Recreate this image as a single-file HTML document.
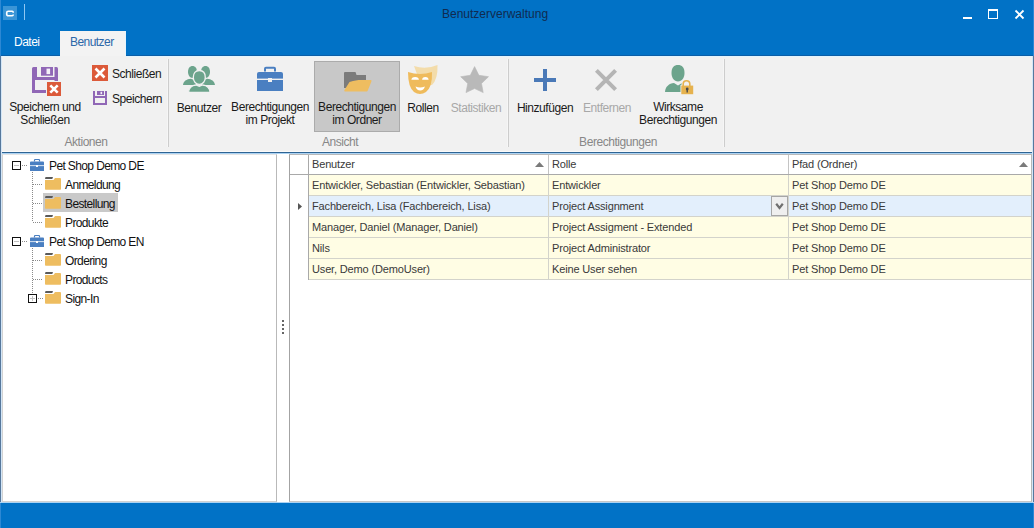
<!DOCTYPE html>
<html><head><meta charset="utf-8">
<style>
*{margin:0;padding:0;box-sizing:border-box}
html,body{width:1034px;height:528px;overflow:hidden;background:#fff}
body{position:relative;font-family:"Liberation Sans",sans-serif;font-size:11px;color:#262626}
.a{position:absolute}
.t{position:absolute;white-space:pre;line-height:13px}
.rs{font-size:12px;letter-spacing:-0.45px;color:#1a1a1a}
.c{position:absolute;white-space:pre;line-height:13px;text-align:center;width:140px;font-size:12px;letter-spacing:-0.45px;color:#1a1a1a}
svg{position:absolute;overflow:visible}
.sep{position:absolute;top:59px;width:1px;height:88px;background:#cdcdcd;box-shadow:-1px 0 0 #f6f6f6}
.gl{position:absolute;text-align:center;width:140px;color:#878787;line-height:13px;font-size:12px;letter-spacing:-0.45px}
.c.dis{color:#a8a8a8}
.tr{position:absolute;white-space:pre;line-height:13px;color:#111;font-size:12px;letter-spacing:-0.62px}
.row{position:absolute;left:290px;width:741px;height:21px}
.cell{position:absolute;top:0;height:21px;white-space:pre;line-height:21px;color:#353535;padding-left:4px}
.gc{position:absolute;white-space:pre;line-height:21px;height:21px;color:#393939;letter-spacing:-0.15px}
.gh{position:absolute;white-space:pre;line-height:19px;height:19px;color:#393939;letter-spacing:-0.15px}
</style></head><body>
<!-- title bar + tabs -->
<div class="a" style="left:0;top:0;width:1034px;height:56px;background:#0172c6"></div>
<div class="a" style="left:0;top:55px;width:1034px;height:1px;background:#0b5ea7"></div>
<!-- app icon -->
<div class="a" style="left:3px;top:6px;width:14px;height:14px;background:#3b95d6"></div>
<svg style="left:3px;top:6px" width="14" height="14"><path d="M10.2 6.8 V6.2 a1 1 0 0 0 -1 -1 H5.3 a1.6 1.6 0 0 0 -1.6 1.6 V8.2 a1.6 1.6 0 0 0 1.6 1.6 H9.2 a1 1 0 0 0 1 -1 V8.5" fill="none" stroke="#fff" stroke-width="1.6"/></svg>
<div class="a" style="left:24px;top:4px;width:1px;height:16px;background:#8fc7f2"></div>
<div class="t" style="left:442px;top:8px;font-size:12px;color:#102b50">Benutzerverwaltung</div>
<!-- window buttons -->
<div class="a" style="left:963px;top:17px;width:9px;height:2px;background:#fff"></div>
<div class="a" style="left:988px;top:9px;width:10px;height:10px;border:1px solid #fff;border-top-width:2px"></div>
<svg style="left:1015px;top:10px" width="9" height="9"><path d="M0.5 0.5 L8.5 8.5 M8.5 0.5 L0.5 8.5" stroke="#fff" stroke-width="1.8"/></svg>
<!-- tabs -->
<div class="t" style="left:14px;top:36px;font-size:12px;letter-spacing:-0.5px;color:#fff">Datei</div>
<div class="a" style="left:60px;top:31px;width:66px;height:26px;background:#f3f3f3;border-right:1px solid #e6f4fd"></div>
<div class="t" style="left:70px;top:36px;font-size:12px;letter-spacing:-0.55px;color:#2c68a8">Benutzer</div>
<!-- ribbon -->
<div class="a" style="left:0;top:56px;width:1034px;height:96px;background:#f1f1f1"></div>
<div class="a" style="left:0;top:151px;width:1034px;height:1px;background:#fafafa"></div>
<div class="a" style="left:0;top:152px;width:1034px;height:1px;background:#2e6494"></div>
<div class="a" style="left:0;top:153px;width:1034px;height:1px;background:#acd3f3"></div>

<!-- ribbon group: Aktionen -->
<svg style="left:32px;top:67px" width="30" height="30">
 <g fill="#9067b6">
 <path d="M0 1.5 a1.5 1.5 0 0 1 1.5 -1.5 H5 V10 H3 V26 H1.5 a1.5 1.5 0 0 1 -1.5 -1.5 Z"/>
 <rect x="0" y="10" width="26" height="3"/>
 <rect x="9" y="0" width="12" height="8.7"/>
 <path d="M22.5 0 H24.5 a1.5 1.5 0 0 1 1.5 1.5 V16 H22.5 Z"/>
 <rect x="0" y="23" width="15" height="3"/>
 </g>
 <rect x="14.5" y="1.6" width="3.6" height="5.5" fill="#f4f0f8"/>
 <rect x="14" y="14" width="16" height="16" fill="#f1f1f1"/>
 <rect x="15" y="15" width="14" height="14" fill="#dc5a3a"/>
 <path d="M18.3 18.3 L25.7 25.7 M25.7 18.3 L18.3 25.7" stroke="#fff" stroke-width="2.6"/>
</svg>
<div class="c" style="left:-25px;top:101px">Speichern und
Schließen</div>
<svg style="left:92px;top:65px" width="16" height="16">
 <rect x="0" y="0" width="16" height="16" fill="#dc5a3a"/>
 <path d="M3.5 3.5 L12.5 12.5 M12.5 3.5 L3.5 12.5" stroke="#fff" stroke-width="2.6"/>
</svg>
<div class="t rs" style="left:112px;top:68px">Schließen</div>
<svg style="left:93px;top:91px" width="14" height="14">
 <g fill="#9067b6">
 <path d="M0 0 H2 V12 H12 V0 H14 V14 H0 Z"/>
 <rect x="0" y="5" width="14" height="2"/>
 <rect x="4" y="0" width="7" height="4"/>
 </g>
 <rect x="7.5" y="0.8" width="1.6" height="2.4" fill="#f4f0f8"/>
</svg>
<div class="t rs" style="left:112px;top:93px">Speichern</div>
<div class="gl" style="left:16px;top:136px">Aktionen</div>
<div class="sep" style="left:168px"></div>

<!-- group Ansicht -->
<svg style="left:183px;top:66px" width="32" height="26">
 <g fill="#6ca48c">
  <path d="M5 6 C5 2 7 0 9.5 0 C12 0 14 2 14 6 C14 9 12 12 9.5 12 C7 12 5 9 5 6 Z"/>
  <path d="M18 6 C18 2 20 0 22.5 0 C25 0 27 2 27 6 C27 9 25 12 22.5 12 C20 12 18 9 18 6 Z"/>
  <path d="M0 19 C0.3 15.5 3.5 13 8 12.8 L9.5 13.5 L11 12.8 H13 V19 Z"/>
  <path d="M32 19 C31.7 15.5 28.5 13 24 12.8 L22.5 13.5 L21 12.8 H19 V19 Z"/>
 </g>
 <g fill="#6ca48c" stroke="#f1f1f1" stroke-width="1.3">
  <path d="M10.3 11.5 C10.3 7 12.5 4.5 16.3 4.5 C20.1 4.5 22.3 7 22.3 11.5 C22.3 15 20 18.3 16.3 18.3 C12.6 18.3 10.3 15 10.3 11.5 Z"/>
  <path d="M5.6 26.3 C5.8 22 9 19.3 13 19 L16.3 20.3 L19.6 19 C23.6 19.3 26.8 22 27 26.3 Z"/>
 </g>
</svg>
<div class="c" style="left:129px;top:102px">Benutzer</div>

<svg style="left:257px;top:66px" width="27" height="26">
 <path d="M8 5.5 V2.8 a1 1 0 0 1 1 -1 H17 a1 1 0 0 1 1 1 V5.5" fill="none" stroke="#4a7fc1" stroke-width="2"/>
 <path d="M0 8 a2 2 0 0 1 2 -2 H24 a2 2 0 0 1 2 2 V25 H0 Z" fill="#4a7fc1"/>
 <rect x="0" y="12.6" width="26" height="1.4" fill="#f1f1f1"/>
 <rect x="11" y="12" width="4" height="4" fill="#f1f1f1"/>
</svg>
<div class="c" style="left:200px;top:101px">Berechtigungen
im Projekt</div>

<div class="a" style="left:314px;top:61px;width:86px;height:71px;background:#c8c8c8;border:1px solid #ababab"></div>
<svg style="left:344px;top:72px" width="28" height="20">
 <path d="M0 1 a1 1 0 0 1 1 -1 H11.5 L12.5 3 H22 V16 H0 Z" fill="#7b7b7b"/>
 <path d="M5.5 10 L9 9 L14.5 8 H26.5 a1 1 0 0 1 0.9 1.4 L23.8 18.5 a1.5 1.5 0 0 1 -1.3 1 H1.2 a1 1 0 0 1 -0.9 -1.3 Z" fill="#eebd60"/>
</svg>
<div class="c" style="left:287px;top:101px">Berechtigungen
im Ordner</div>

<svg style="left:408px;top:65px" width="30" height="29">
 <path d="M6 1 Q17.5 5 29.5 0 Q30 14 24 20 L13 20 Z" fill="#f3dcaa"/>
 <path d="M0 7 Q12 11 24 7 Q24.5 22 18 27 Q12 31 6 27 Q0 22 0 7 Z" fill="#efbb5c"/>
 <path d="M3.4 14.8 A3.75 2.9 0 0 1 10.9 14.8 Z M14.1 14.8 A3.25 2.9 0 0 1 20.6 14.8 Z" fill="#fff"/>
 <path d="M7.5 21.6 Q12 23.4 16.9 21.6 Q15.8 25.6 12.2 25.6 Q8.7 25.6 7.5 21.6 Z" fill="#fff"/>
</svg>
<div class="c" style="left:353px;top:102px">Rollen</div>

<svg style="left:460px;top:66px" width="30" height="28">
 <path d="M14.6 0.6 L18.9 9.3 L28.5 10.7 L21.5 17.5 L23.2 26.6 L14.6 22.5 L6.0 26.6 L7.7 17.5 L0.7 10.7 L10.3 9.3 Z" fill="#b9b9b9" stroke="#b9b9b9" stroke-width="0.6" stroke-linejoin="round"/>
</svg>
<div class="c dis" style="left:406px;top:102px">Statistiken</div>
<div class="gl" style="left:270px;top:136px">Ansicht</div>
<div class="sep" style="left:508px"></div>

<!-- group Berechtigungen -->
<div class="a" style="left:534px;top:78px;width:22px;height:4px;background:#4a79b7"></div>
<div class="a" style="left:543px;top:69px;width:4px;height:22px;background:#4a79b7"></div>
<div class="c" style="left:475px;top:102px">Hinzufügen</div>
<svg style="left:595px;top:69px" width="22" height="22">
 <path d="M1.4 1.4 L20.6 20.6 M20.6 1.4 L1.4 20.6" stroke="#b5b5b5" stroke-width="4"/>
</svg>
<div class="c dis" style="left:537px;top:102px">Entfernen</div>

<svg style="left:664px;top:64px" width="31" height="31">
 <path d="M7.5 9 C7.5 3.5 10 1 14 1 C18 1 20.5 3.5 20.5 9 C20.5 13.5 18 17.5 14 17.5 C10 17.5 7.5 13.5 7.5 9 Z" fill="#6ca48c"/>
 <path d="M1 28 C1.5 22.5 5 19.5 10 19 L14 21.5 L18 19 H18 V28 Z" fill="#6ca48c"/>
 <path d="M19.2 22 V20 a3.3 3.3 0 0 1 6.6 0 V22" fill="none" stroke="#f1f1f1" stroke-width="3.4"/>
 <rect x="16.5" y="21" width="13.5" height="10" fill="#f1f1f1"/>
 <path d="M19.2 22 V20 a3.3 3.3 0 0 1 6.6 0 V22" fill="none" stroke="#e6b24e" stroke-width="1.6"/>
 <rect x="17.3" y="21.6" width="11.9" height="8.6" fill="#e6b24e"/>
 <circle cx="23.2" cy="25" r="1.4" fill="#4a4a4a"/>
 <rect x="22.5" y="25" width="1.4" height="3.5" fill="#4a4a4a"/>
</svg>
<div class="c" style="left:608px;top:101px">Wirksame
Berechtigungen</div>
<div class="gl" style="left:548px;top:136px">Berechtigungen</div>
<div class="sep" style="left:724px"></div>

<!-- content -->
<div class="a" style="left:0;top:154px;width:1034px;height:349px;background:#fff"></div>

<!-- tree panel border -->
<div class="a" style="left:2px;top:154px;width:275px;height:348px;border:1px solid #d2d2d2;border-top-color:#e4e4e4;border-right-color:#b9b9b9"></div>
<!-- grid panel border -->
<div class="a" style="left:289px;top:154px;width:743px;height:348px;border:1px solid #a3a3a3;border-top-color:#b9b9b9;border-right-color:#b8b8b8;border-bottom-color:#c8c8c8"></div>

<!-- tree -->
<div class="a" style="left:43px;top:193px;width:75px;height:19px;background:#c9c9c9"></div>
<div class="a" style="left:12px;top:161px;width:9px;height:9px;border:1px solid #111;background:#fff"></div><div class="a" style="left:14px;top:165px;width:5px;height:1px;background:#c0c0c0"></div><div class="a" style="left:22px;top:165px;width:6px;height:1px;background:repeating-linear-gradient(90deg,#8a8a8a 0 1px,transparent 1px 2px)"></div><svg style="left:30px;top:159px" width="14" height="12"><path d="M4.5 2.5 V1.2 a0.7 0.7 0 0 1 0.7 -0.7 H8.8 a0.7 0.7 0 0 1 0.7 0.7 V2.5" fill="none" stroke="#4a7fc1" stroke-width="1.2"/><path d="M0 3.5 a1 1 0 0 1 1 -1 H13 a1 1 0 0 1 1 1 V12 H0 Z" fill="#4a7fc1"/><rect x="0" y="6.3" width="14" height="0.8" fill="#fff"/><rect x="6" y="6" width="2" height="2" fill="#fff"/></svg><div class="tr" style="left:49px;top:160px">Pet Shop Demo DE</div>
<div class="a" style="left:32px;top:172px;width:1px;height:50px;background:repeating-linear-gradient(180deg,#8a8a8a 0 1px,transparent 1px 2px)"></div><div class="a" style="left:33px;top:184px;width:10px;height:1px;background:repeating-linear-gradient(90deg,#8a8a8a 0 1px,transparent 1px 2px)"></div><svg style="left:45px;top:177px" width="16" height="13"><path d="M0.5 0 H8 L7.3 2 H0 Z" fill="#5a5a5a"/><path d="M0 3 H8.5 L10 1 H15 a1 1 0 0 1 1 1 V12 a0.8 0.8 0 0 1 -0.8 0.8 H0.8 a0.8 0.8 0 0 1 -0.8 -0.8 Z" fill="#eebd60"/></svg><div class="tr" style="left:65px;top:179px">Anmeldung</div>
<div class="a" style="left:33px;top:203px;width:10px;height:1px;background:repeating-linear-gradient(90deg,#8a8a8a 0 1px,transparent 1px 2px)"></div><svg style="left:45px;top:196px" width="16" height="13"><path d="M0.5 0 H8 L7.3 2 H0 Z" fill="#5a5a5a"/><path d="M0 3 H8.5 L10 1 H15 a1 1 0 0 1 1 1 V12 a0.8 0.8 0 0 1 -0.8 0.8 H0.8 a0.8 0.8 0 0 1 -0.8 -0.8 Z" fill="#eebd60"/></svg><div class="tr" style="left:65px;top:198px">Bestellung</div>
<div class="a" style="left:33px;top:222px;width:10px;height:1px;background:repeating-linear-gradient(90deg,#8a8a8a 0 1px,transparent 1px 2px)"></div><svg style="left:45px;top:215px" width="16" height="13"><path d="M0.5 0 H8 L7.3 2 H0 Z" fill="#5a5a5a"/><path d="M0 3 H8.5 L10 1 H15 a1 1 0 0 1 1 1 V12 a0.8 0.8 0 0 1 -0.8 0.8 H0.8 a0.8 0.8 0 0 1 -0.8 -0.8 Z" fill="#eebd60"/></svg><div class="tr" style="left:65px;top:217px">Produkte</div>
<div class="a" style="left:12px;top:237px;width:9px;height:9px;border:1px solid #111;background:#fff"></div><div class="a" style="left:14px;top:241px;width:5px;height:1px;background:#c0c0c0"></div><div class="a" style="left:22px;top:241px;width:6px;height:1px;background:repeating-linear-gradient(90deg,#8a8a8a 0 1px,transparent 1px 2px)"></div><svg style="left:30px;top:235px" width="14" height="12"><path d="M4.5 2.5 V1.2 a0.7 0.7 0 0 1 0.7 -0.7 H8.8 a0.7 0.7 0 0 1 0.7 0.7 V2.5" fill="none" stroke="#4a7fc1" stroke-width="1.2"/><path d="M0 3.5 a1 1 0 0 1 1 -1 H13 a1 1 0 0 1 1 1 V12 H0 Z" fill="#4a7fc1"/><rect x="0" y="6.3" width="14" height="0.8" fill="#fff"/><rect x="6" y="6" width="2" height="2" fill="#fff"/></svg><div class="tr" style="left:49px;top:236px">Pet Shop Demo EN</div>
<div class="a" style="left:32px;top:248px;width:1px;height:46px;background:repeating-linear-gradient(180deg,#8a8a8a 0 1px,transparent 1px 2px)"></div><div class="a" style="left:33px;top:260px;width:10px;height:1px;background:repeating-linear-gradient(90deg,#8a8a8a 0 1px,transparent 1px 2px)"></div><svg style="left:45px;top:253px" width="16" height="13"><path d="M0.5 0 H8 L7.3 2 H0 Z" fill="#5a5a5a"/><path d="M0 3 H8.5 L10 1 H15 a1 1 0 0 1 1 1 V12 a0.8 0.8 0 0 1 -0.8 0.8 H0.8 a0.8 0.8 0 0 1 -0.8 -0.8 Z" fill="#eebd60"/></svg><div class="tr" style="left:65px;top:255px">Ordering</div>
<div class="a" style="left:33px;top:279px;width:10px;height:1px;background:repeating-linear-gradient(90deg,#8a8a8a 0 1px,transparent 1px 2px)"></div><svg style="left:45px;top:272px" width="16" height="13"><path d="M0.5 0 H8 L7.3 2 H0 Z" fill="#5a5a5a"/><path d="M0 3 H8.5 L10 1 H15 a1 1 0 0 1 1 1 V12 a0.8 0.8 0 0 1 -0.8 0.8 H0.8 a0.8 0.8 0 0 1 -0.8 -0.8 Z" fill="#eebd60"/></svg><div class="tr" style="left:65px;top:274px">Products</div>
<div class="a" style="left:28px;top:294px;width:9px;height:9px;border:1px solid #111;background:#fff"></div><div class="a" style="left:30px;top:298px;width:5px;height:1px;background:#c0c0c0"></div><div class="a" style="left:32px;top:296px;width:1px;height:5px;background:#c0c0c0"></div><div class="a" style="left:38px;top:298px;width:5px;height:1px;background:repeating-linear-gradient(90deg,#8a8a8a 0 1px,transparent 1px 2px)"></div><svg style="left:45px;top:291px" width="16" height="13"><path d="M0.5 0 H8 L7.3 2 H0 Z" fill="#5a5a5a"/><path d="M0 3 H8.5 L10 1 H15 a1 1 0 0 1 1 1 V12 a0.8 0.8 0 0 1 -0.8 0.8 H0.8 a0.8 0.8 0 0 1 -0.8 -0.8 Z" fill="#eebd60"/></svg><div class="tr" style="left:65px;top:293px">Sign-In</div>
<!-- grid -->
<div class="a" style="left:290px;top:155px;width:741px;height:19px;background:#fff"></div>
<div class="a" style="left:290px;top:174px;width:741px;height:1px;background:#a9a9a9"></div>
<div class="a" style="left:309px;top:175px;width:722px;height:20px;background:#fffde4"></div>
<div class="a" style="left:309px;top:195px;width:722px;height:1px;background:#d3d3cb"></div>
<div class="gc" style="left:312px;top:175px">Entwickler, Sebastian (Entwickler, Sebastian)</div>
<div class="gc" style="left:552px;top:175px">Entwickler</div>
<div class="gc" style="left:792px;top:175px">Pet Shop Demo DE</div>
<div class="a" style="left:309px;top:196px;width:722px;height:20px;background:#e3effc"></div>
<div class="a" style="left:309px;top:216px;width:722px;height:1px;background:#d3d3cb"></div>
<div class="gc" style="left:312px;top:196px">Fachbereich, Lisa (Fachbereich, Lisa)</div>
<div class="gc" style="left:552px;top:196px">Project Assignment</div>
<div class="gc" style="left:792px;top:196px">Pet Shop Demo DE</div>
<div class="a" style="left:309px;top:217px;width:722px;height:20px;background:#fffde4"></div>
<div class="a" style="left:309px;top:237px;width:722px;height:1px;background:#d3d3cb"></div>
<div class="gc" style="left:312px;top:217px">Manager, Daniel (Manager, Daniel)</div>
<div class="gc" style="left:552px;top:217px">Project Assigment - Extended</div>
<div class="gc" style="left:792px;top:217px">Pet Shop Demo DE</div>
<div class="a" style="left:309px;top:238px;width:722px;height:20px;background:#fffde4"></div>
<div class="a" style="left:309px;top:258px;width:722px;height:1px;background:#d3d3cb"></div>
<div class="gc" style="left:312px;top:238px">Nils</div>
<div class="gc" style="left:552px;top:238px">Project Administrator</div>
<div class="gc" style="left:792px;top:238px">Pet Shop Demo DE</div>
<div class="a" style="left:309px;top:259px;width:722px;height:20px;background:#fffde4"></div>
<div class="a" style="left:309px;top:279px;width:722px;height:1px;background:#d3d3cb"></div>
<div class="gc" style="left:312px;top:259px">User, Demo (DemoUser)</div>
<div class="gc" style="left:552px;top:259px">Keine User sehen</div>
<div class="gc" style="left:792px;top:259px">Pet Shop Demo DE</div>
<div class="a" style="left:308px;top:155px;width:1px;height:125px;background:#a9a9a9"></div>
<div class="a" style="left:548px;top:155px;width:1px;height:19px;background:#c4c4c4"></div>
<div class="a" style="left:788px;top:155px;width:1px;height:19px;background:#c4c4c4"></div>
<div class="a" style="left:548px;top:175px;width:1px;height:105px;background:#d3d3cb"></div>
<div class="a" style="left:788px;top:175px;width:1px;height:105px;background:#d3d3cb"></div>
<div class="gh" style="left:312px;top:155px">Benutzer</div>
<div class="gh" style="left:552px;top:155px">Rolle</div>
<div class="gh" style="left:792px;top:155px">Pfad (Ordner)</div>
<svg style="left:535px;top:162px" width="9" height="5"><path d="M0 5 L4.5 0 L9 5 Z" fill="#7a7a7a"/></svg>
<svg style="left:1019px;top:162px" width="9" height="5"><path d="M0 5 L4.5 0 L9 5 Z" fill="#7a7a7a"/></svg>
<svg style="left:298px;top:203px" width="5" height="7"><path d="M0 0 L4 3.5 L0 7 Z" fill="#555"/></svg>
<div class="a" style="left:771px;top:196px;width:17px;height:20px;background:#efefef;border:1px solid #a6a6a6"></div>
<svg style="left:775px;top:203px" width="9" height="7"><path d="M1.2 0.8 L4.5 4.9 L7.8 0.8" fill="none" stroke="#707070" stroke-width="2.2"/></svg>
<!-- splitter grip -->
<div class="a" style="left:282px;top:320px;width:2px;height:2px;background:#656565"></div>
<div class="a" style="left:282px;top:324px;width:2px;height:2px;background:#656565"></div>
<div class="a" style="left:282px;top:328px;width:2px;height:2px;background:#656565"></div>
<div class="a" style="left:282px;top:332px;width:2px;height:2px;background:#656565"></div>

<!-- frame -->
<div class="a" style="left:0;top:0;width:1px;height:56px;background:#2d88d4"></div>
<div class="a" style="left:1033px;top:0;width:1px;height:56px;background:#2d88d4"></div>
<div class="a" style="left:0;top:56px;width:60px;height:1px;background:#e2f4fd"></div><div class="a" style="left:126px;top:56px;width:908px;height:1px;background:#e2f4fd"></div>
<div class="a" style="left:0;top:56px;width:1px;height:447px;background:#56789c"></div>
<div class="a" style="left:1px;top:56px;width:1px;height:447px;background:#d3e6f7"></div>
<div class="a" style="left:1033px;top:56px;width:1px;height:447px;background:#56789c"></div>
<div class="a" style="left:1032px;top:56px;width:1px;height:447px;background:#d3e6f7"></div>
<!-- status bar -->
<div class="a" style="left:0;top:502px;width:1034px;height:1px;background:#acd3f3"></div>
<div class="a" style="left:0;top:503px;width:1034px;height:25px;background:#0172c6"></div>
<div class="a" style="left:0;top:503px;width:1px;height:25px;background:#2d88d4"></div>
<div class="a" style="left:1033px;top:503px;width:1px;height:25px;background:#2d88d4"></div>
</body></html>
